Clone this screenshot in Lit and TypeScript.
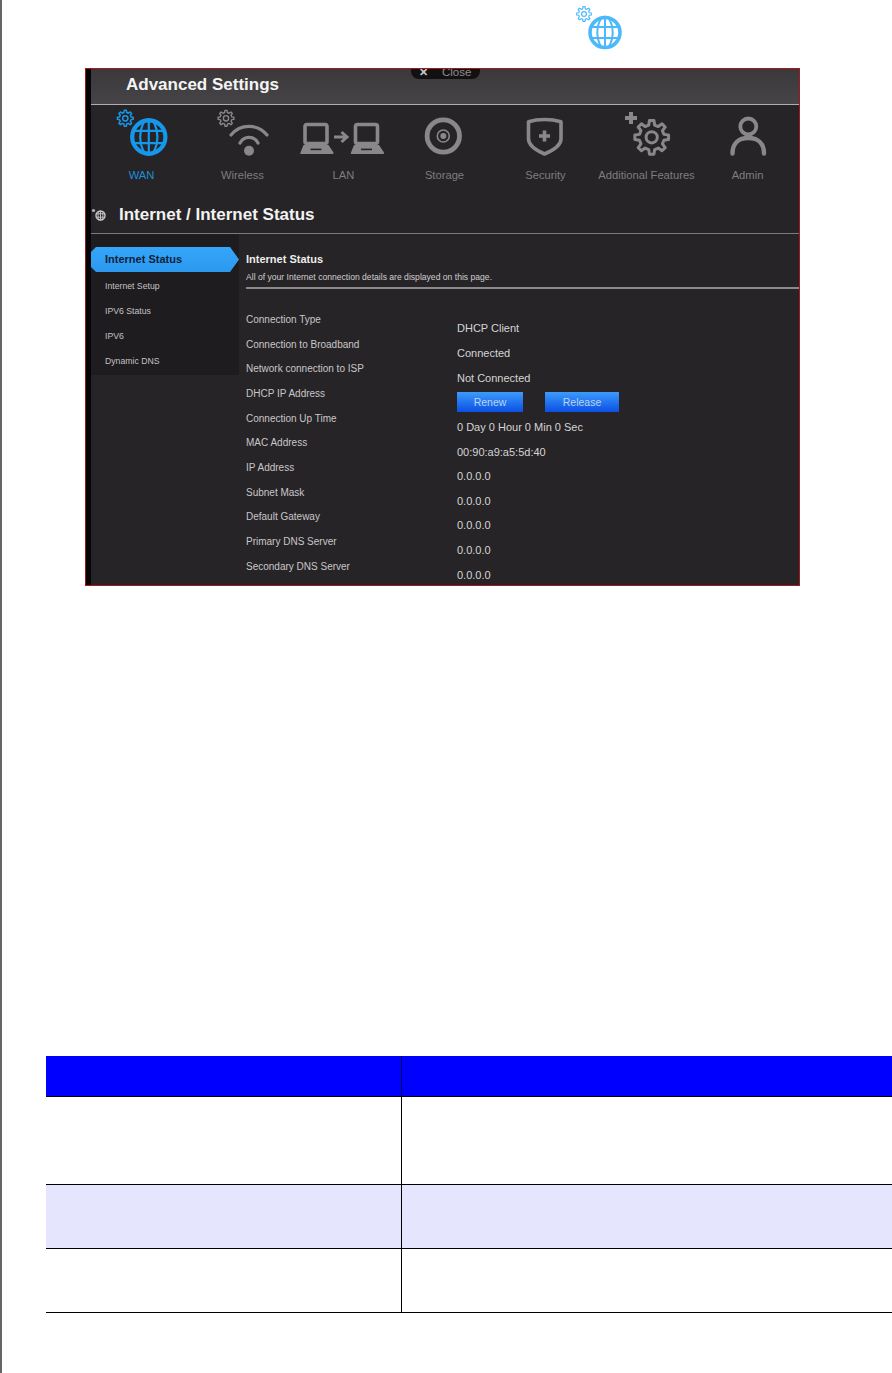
import { LitElement, html, css, svg, unsafeCSS } from "lit";
import { customElement } from "lit/decorators.js";

/* Gear outline: 8 rounded teeth, as path data centred on (cx, cy). */
function gearPath(cx: number, cy: number, r: number): string {
  const inner = r * 0.74;
  const pts: string[] = [];
  const teeth = 8;
  for (let i = 0; i < teeth; i++) {
    const a = (i * 2 * Math.PI) / teeth - Math.PI / 2;
    const step = (2 * Math.PI) / teeth;
    const seq: [number, number][] = [
      [inner, a - step * 0.3],
      [r, a - step * 0.17],
      [r, a + step * 0.17],
      [inner, a + step * 0.3],
    ];
    for (const [rad, ang] of seq) {
      pts.push(`${(cx + rad * Math.cos(ang)).toFixed(2)} ${(cy + rad * Math.sin(ang)).toFixed(2)}`);
    }
  }
  return "M" + pts.join("L") + "Z";
}

const gear = (cx: number, cy: number, r: number, color: string, sw: number) => svg`
  <path d=${gearPath(cx, cy, r)} fill="none" stroke=${color} stroke-width=${sw} stroke-linejoin="round"/>
  <circle cx=${cx} cy=${cy} r=${r * 0.33} fill="none" stroke=${color} stroke-width=${sw}/>`;

/* Globe: a thick ring with a grid of meridians and parallels in the same colour. */
const globe = (cx: number, cy: number, r: number, color: string, ring: number, sw: number) => svg`
  <g fill="none" stroke=${color} stroke-width=${sw}>
    <circle cx=${cx} cy=${cy} r=${r - ring / 2} stroke-width=${ring}/>
    <ellipse cx=${cx} cy=${cy} rx=${r * 0.46} ry=${r - 1}/>
    <path d="M${cx} ${cy - r + 1}V${cy + r - 1}"/>
    <path d="M${cx - r * 0.9} ${cy - r * 0.33}H${cx + r * 0.9}M${cx - r * 0.9} ${cy + r * 0.33}H${cx + r * 0.9}"/>
  </g>`;

const G = "#8a878a";
const B = "#1598ec";
const BG = "#262426";

const laptop = (x: number) => svg`
  <rect x=${x + 4.5} y="19.5" width="22" height="19" rx="2" fill="none" stroke=${G} stroke-width="3.6"/>
  <path d="M${x + 3} 40H${x + 28}L${x + 33} 47.5Q${x + 33.5} 49 ${x + 31} 49H${x} Q${x - 0.5} 49 ${x} 47.5Z" fill=${G}/>
  <rect x=${x + 10} y="43.6" width="11" height="1.6" fill=${BG}/>`;

const ICONS = [
  svg`${gear(34.3, 13.3, 8, B, 1.5)}${globe(57.8, 32, 18.7, B, 4.2, 2.2)}`,
  svg`${gear(34, 13.3, 8, G, 1.4)}
    <g fill="none" stroke=${G} stroke-width="3.2" stroke-linecap="round">
      <path d="M39 30A23 23 0 0 1 75 30"/>
      <path d="M48 38A10 10 0 0 1 66 38"/>
    </g>
    <circle cx="57" cy="45.7" r="5" fill=${G}/>`,
  svg`${laptop(7.5)}${laptop(58)}
    <path d="M41 32H53M48.5 27L54 32L48.5 37" fill="none" stroke=${G} stroke-width="3"/>`,
  svg`<circle cx="49.3" cy="31" r="16.2" fill="none" stroke=${G} stroke-width="4.8"/>
    <circle cx="49.3" cy="31" r="6" fill="none" stroke=${G} stroke-width="1.6"/>
    <circle cx="49.3" cy="31" r="3" fill=${G}/>`,
  svg`<g transform="translate(-1.5 0)"><path d="M51 14.5Q60 14.5 67.5 16.8V34Q67.5 42 51 49Q35 42 35 34V16.8Q42 14.5 51 14.5Z" fill="none" stroke=${G} stroke-width="3.6" stroke-linejoin="round"/>
    <path d="M51 25.5V36.5M45.5 31H56.5" fill="none" stroke=${G} stroke-width="3.6"/></g>`,
  svg`${gear(55.7, 32.3, 17, G, 3)}
    <path d="M35 7V19M29 13H41" fill="none" stroke=${G} stroke-width="4"/>`,
  svg`<circle cx="51.3" cy="21.5" r="8" fill="none" stroke=${G} stroke-width="3.8"/>
    <path d="M35.5 48.5C35.5 38 42 33 51.3 33C60.5 33 67 38 67 48.5" fill="none" stroke=${G} stroke-width="4.4" stroke-linecap="round"/>`,
];

const NAV = ["WAN", "Wireless", "LAN", "Storage", "Security", "Additional Features", "Admin"];
const SIDE = ["Internet Setup", "IPV6 Status", "IPV6", "Dynamic DNS"];
const LABELS = [
  "Connection Type", "Connection to Broadband", "Network connection to ISP", "DHCP IP Address",
  "Connection Up Time", "MAC Address", "IP Address", "Subnet Mask", "Default Gateway",
  "Primary DNS Server", "Secondary DNS Server",
];
const VALUES = [
  "DHCP Client", "Connected", "Not Connected", null, "0 Day 0 Hour 0 Min 0 Sec",
  "00:90:a9:a5:5d:40", "0.0.0.0", "0.0.0.0", "0.0.0.0", "0.0.0.0", "0.0.0.0",
];

@customElement("app-root")
export class AppRoot extends LitElement {
  static styles = css`
    :host {
      display: block;
      width: 892px;
      height: 1373px;
      box-sizing: border-box;
      background: #fff;
      border-left: 2px solid #666;
      overflow: hidden;
      font-family: "Liberation Sans", Arial, sans-serif;
    }
    .top-icon { height: 68px; display: flex; padding-left: 573px; }
    .top-icon svg { width: 50px; height: 54px; display: block; }
    .shot {
      position: relative;
      box-sizing: border-box;
      margin-left: 83px;
      width: 715px;
      height: 518px;
      border: 1px solid #a5171d;
      border-top-width: 1.4px;
      display: flex;
      background: ${unsafeCSS(BG)};
      overflow: hidden;
    }
    .strip { width: 5px; background: #050505; flex: none; }
    .main { flex: 1; min-width: 0; display: flex; flex-direction: column; }
    .head {
      flex: none;
      box-sizing: border-box;
      height: 36px;
      padding: 0 0 4px 35px;
      display: flex;
      align-items: center;
      background: linear-gradient(#3a383a, #464447);
      border-bottom: 1px solid #b0aeb0;
      color: #f4f4f4;
      font-size: 17px;
      font-weight: 700;
    }
    .close {
      position: absolute;
      left: 325px;
      top: 0;
      width: 69px;
      height: 10px;
      background: #121112;
      border-radius: 0 0 8px 8px;
      overflow: hidden;
      color: #8f8d8f;
      font-size: 11.5px;
      display: flex;
      gap: 14px;
      padding-left: 8px;
      box-sizing: border-box;
      line-height: 6px;
    }
    .close b { color: #c8c8c8; font-size: 11px; }
    .nav { display: flex; height: 91px; flex: none; }
    .nav-item { width: 101px; flex: none; display: flex; flex-direction: column; align-items: center; }
    .nav-item svg { width: 101px; height: 60px; display: block; }
    .nav-label { font-size: 11.2px; line-height: 14px; margin-top: 3px; color: #7f7d7f; white-space: nowrap; }
    .nav-label.on { color: #1c8fdc; }
    .title {
      flex: none;
      box-sizing: border-box;
      height: 38px;
      border-bottom: 1px solid #7c7a7c;
      display: flex;
      align-items: center;
      color: #f2f2f2;
      font-size: 17px;
      font-weight: 700;
    }
    .title svg { width: 18px; height: 16px; margin: 0 10px 0 0; flex: none; }
    .split { display: flex; flex: 1; min-height: 0; }
    .side {
      width: 148px;
      flex: none;
      align-self: flex-start;
      box-sizing: border-box;
      height: 141px;
      padding-top: 13px;
      background: #1e1c1e;
    }
    .active {
      height: 25px;
      width: 148px;
      box-sizing: border-box;
      padding-left: 14px;
      background: linear-gradient(#35a6fb, #2b98ee);
      clip-path: polygon(5px 0, 139px 0, 148px 12.5px, 139px 25px, 5px 25px, 0 20px, 0 5px);
      color: #0e2238;
      font-size: 11px;
      font-weight: 700;
      line-height: 25px;
      margin-bottom: 2px;
    }
    .side-item { height: 25px; padding-left: 14px; font-size: 8.7px; line-height: 25px; color: #c4c2c4; }
    .content { flex: 1; min-width: 0; padding: 18px 0 0 7px; color: #d4d2d4; }
    .c-title { font-size: 11px; font-weight: 700; line-height: 14px; color: #ececec; }
    .c-desc { font-size: 8.6px; line-height: 12px; margin-top: 5px; color: #d0ced0; white-space: nowrap; }
    .rule { height: 2px; background: #8b898b; margin-top: 4px; }
    .cols { display: flex; margin-top: 18.4px; }
    .labels { width: 211px; flex: none; }
    .values { margin-top: 8.6px; }
    .row { height: 24.65px; display: flex; align-items: center; white-space: nowrap; }
    .labels .row { font-size: 10px; color: #c9c7c9; }
    .values .row { font-size: 11px; color: #d6d4d6; }
    .btns { display: flex; gap: 22px; }
    .btn {
      height: 20px;
      width: 66px;
      background: linear-gradient(#3d9bfb, #0a4fe4);
      color: #b9d6f6;
      font-size: 10.5px;
      line-height: 20px;
      text-align: center;
    }
    .btn.wide { width: 74px; }
    .table { margin: 470px 0 0 44px; width: 846px; display: grid; grid-template-columns: 356px 1fr; }
    .cell { box-sizing: border-box; border-bottom: 1px solid #000; }
    .cell.l { border-right: 1px solid #000; }
    .hd { height: 41px; background: #0000ff; }
    .cell.hd.l { border-right-color: #000060; }
    .r1 { height: 88px; }
    .r2 { height: 64px; background: #e5e6fd; }
    .r3 { height: 64px; }
  `;

  render() {
    return html`
      <div class="top-icon">
        <svg viewBox="0 0 50 54">
          ${gear(9, 14, 7.4, "#4cb9fb", 1.2)}
          ${globe(30, 32.5, 16.8, "#4cb9fb", 3.6, 2)}
        </svg>
      </div>
      <div class="shot">
        <div class="strip"></div>
        <div class="main">
          <div class="head">Advanced Settings</div>
          <div class="nav">
            ${NAV.map(
              (n, i) => html`
                <div class="nav-item">
                  <svg viewBox="0 0 101 60">${ICONS[i]}</svg>
                  <div class="nav-label ${i === 0 ? "on" : ""}">${n}</div>
                </div>`
            )}
          </div>
          <div class="title">
            <svg viewBox="0 0 18 16">
              <circle cx="2.5" cy="3.5" r="1.6" fill="#b5b3b5"/>
              ${globe(9.5, 8.5, 5.2, "#c9c7c9", 1.4, 0.9)}
            </svg>
            Internet / Internet Status
          </div>
          <div class="split">
            <div class="side">
              <div class="active">Internet Status</div>
              ${SIDE.map((s) => html`<div class="side-item">${s}</div>`)}
            </div>
            <div class="content">
              <div class="c-title">Internet Status</div>
              <div class="c-desc">All of your Internet connection details are displayed on this page.</div>
              <div class="rule"></div>
              <div class="cols">
                <div class="labels">${LABELS.map((l) => html`<div class="row">${l}</div>`)}</div>
                <div class="values">
                  ${VALUES.map((v) =>
                    v === null
                      ? html`<div class="row"><div class="btns"><div class="btn">Renew</div><div class="btn wide">Release</div></div></div>`
                      : html`<div class="row">${v}</div>`
                  )}
                </div>
              </div>
            </div>
          </div>
        </div>
        <div class="close"><b>✕</b><span>Close</span></div>
      </div>
      <div class="table">
        <div class="cell hd l"></div><div class="cell hd"></div>
        <div class="cell r1 l"></div><div class="cell r1"></div>
        <div class="cell r2 l"></div><div class="cell r2"></div>
        <div class="cell r3 l"></div><div class="cell r3"></div>
      </div>
    `;
  }
}
